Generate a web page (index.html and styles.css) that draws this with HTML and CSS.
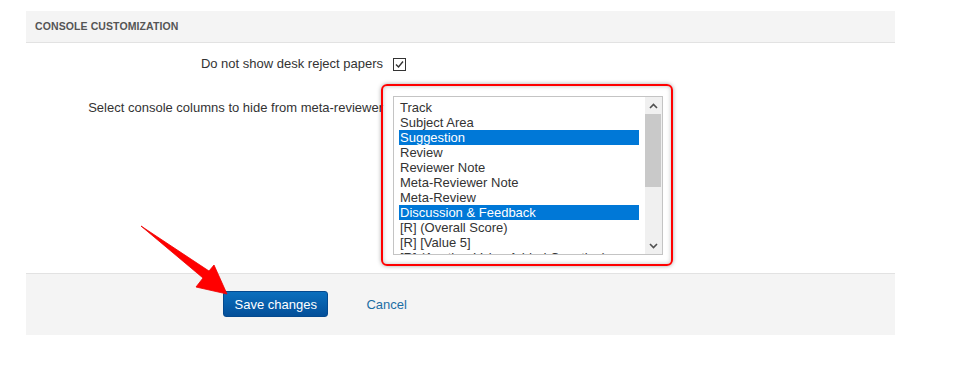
FILE: index.html
```html
<!DOCTYPE html>
<html lang="en">
<head>
    <meta charset="UTF-8">
    <meta name="viewport" content="width=device-width, initial-scale=1.0">
    <title>Console Customization</title>
    <link rel="stylesheet" href="styles.css">
</head>
<body>
    <div class="panel">
        <div class="panel-head">CONSOLE CUSTOMIZATION</div>

        <div class="panel-body">
            <div class="form-row">
                <label class="form-label" for="hideDeskReject">Do not show desk reject papers</label>
                <div class="form-field">
                    <span class="check" id="hideDeskReject">
                        <svg width="11" height="11" viewBox="0 0 11 11"><polyline points="2,5.5 4.5,8 9,2.5" fill="none" stroke="#333" stroke-width="1.4"/></svg>
                    </span>
                </div>
            </div>

            <div class="form-row form-row-top">
                <label class="form-label">Select console columns to hide from meta-reviewer</label>
                <div class="form-field">
                    <div class="listbox">
                        <div class="listbox-items">
                            <div class="opt">Track</div>
                            <div class="opt">Subject Area</div>
                            <div class="opt selected">Suggestion</div>
                            <div class="opt">Review</div>
                            <div class="opt">Reviewer Note</div>
                            <div class="opt">Meta-Reviewer Note</div>
                            <div class="opt">Meta-Review</div>
                            <div class="opt selected">Discussion &amp; Feedback</div>
                            <div class="opt">[R] (Overall Score)</div>
                            <div class="opt">[R] [Value 5]</div>
                            <div class="opt">[R] (Another Value Added Question)</div>
                        </div>
                        <div class="scrollbar">
                            <div class="scroll-btn">
                                <svg width="9" height="6" viewBox="0 0 9 6"><polyline points="1,5 4.5,1.5 8,5" fill="none" stroke="#505050" stroke-width="1.6"/></svg>
                            </div>
                            <div class="scroll-track"><div class="scroll-thumb"></div></div>
                            <div class="scroll-btn">
                                <svg width="9" height="6" viewBox="0 0 9 6"><polyline points="1,1 4.5,4.5 8,1" fill="none" stroke="#505050" stroke-width="1.6"/></svg>
                            </div>
                        </div>
                        <!-- annotation -->
                        <div class="highlight-ring"></div>
                    </div>
                </div>
            </div>
        </div>

        <div class="panel-foot">
            <button type="button" class="btn-primary">Save changes</button>
            <a href="#" class="link-cancel">Cancel</a>
        </div>
    </div>

    <!-- annotation arrow -->
    <svg class="arrow" width="966" height="367" viewBox="0 0 966 367">
        <polygon points="141,226 209,271 214,265 227,294 196,287 203,278" fill="#f00" stroke="#e00" stroke-width="0.8" stroke-linejoin="round"/>
    </svg>
</body>
</html>
```

FILE: styles.css
```css
body {
    margin: 0;
    font-family: "Liberation Sans", Arial, sans-serif;
    font-size: 13px;
    color: #333;
    background-color: #fff;
}

.panel {
    width: 869px;
    margin: 11px 0 0 26px;
}

.panel-head {
    height: 31px;
    line-height: 31px;
    padding-left: 9px;
    background-color: #f4f4f4;
    border-bottom: 1px solid #e2e2e2;
    font-size: 10.5px;
    font-weight: bold;
    color: #555;
    letter-spacing: 0.1px;
}

.panel-body {
    padding: 11px 0 18px 0;
}

.form-row {
    display: flex;
    align-items: center;
    line-height: 20px;
}

.form-row-top {
    align-items: flex-start;
    margin-top: 22px;
}

.form-label {
    width: 367px;
    flex-shrink: 0;
    text-align: right;
    padding-right: 10px;
    box-sizing: border-box;
    white-space: nowrap;
}

.form-row-top .form-label {
    padding-top: 2px;
}

.check {
    display: flex;
    align-items: center;
    justify-content: center;
    width: 11px;
    height: 11px;
    border: 1px solid #333;
    background-color: #fff;
}

.listbox {
    position: relative;
    display: flex;
    width: 268px;
    height: 157px;
    border: 1px solid #c4c4c4;
    background-color: #fff;
}

.listbox-items {
    flex: 1;
    padding: 3px 6px 0 5px;
    overflow: hidden;
    line-height: 15px;
}

.opt {
    padding-left: 1px;
    white-space: nowrap;
    color: #333;
}

.opt.selected {
    background-color: #0078d7;
    color: #fff;
}

.scrollbar {
    width: 17px;
    display: flex;
    flex-direction: column;
    background-color: #f0f0f0;
}

.scroll-btn {
    height: 17px;
    display: flex;
    align-items: center;
    justify-content: center;
}

.scroll-track {
    flex: 1;
}

.scroll-thumb {
    width: 16px;
    height: 73px;
    background-color: #c9c9c9;
}

.highlight-ring {
    position: absolute;
    top: -13px;
    left: -13px;
    right: -11px;
    bottom: -12px;
    border: 2px solid #f00;
    border-radius: 6px;
    box-shadow: 0 0 4px rgba(0, 0, 0, 0.35), inset 0 0 4px rgba(0, 0, 0, 0.25);
    pointer-events: none;
}

.panel-foot {
    display: flex;
    align-items: center;
    padding: 17px 0 18px 197px;
    background-color: #f4f4f4;
    border-top: 1px solid #e2e2e2;
}

.btn-primary {
    height: 26px;
    padding: 0 10.5px;
    font-family: inherit;
    font-size: 13px;
    color: #fff;
    background: linear-gradient(to bottom, #0b6fbd, #034f99);
    border: 1px solid #04498e;
    border-radius: 3px;
    cursor: pointer;
}

.link-cancel {
    margin-left: 38px;
    color: #1c6ea4;
    text-decoration: none;
}

.arrow {
    position: absolute;
    top: 0;
    left: 0;
    pointer-events: none;
}
```
